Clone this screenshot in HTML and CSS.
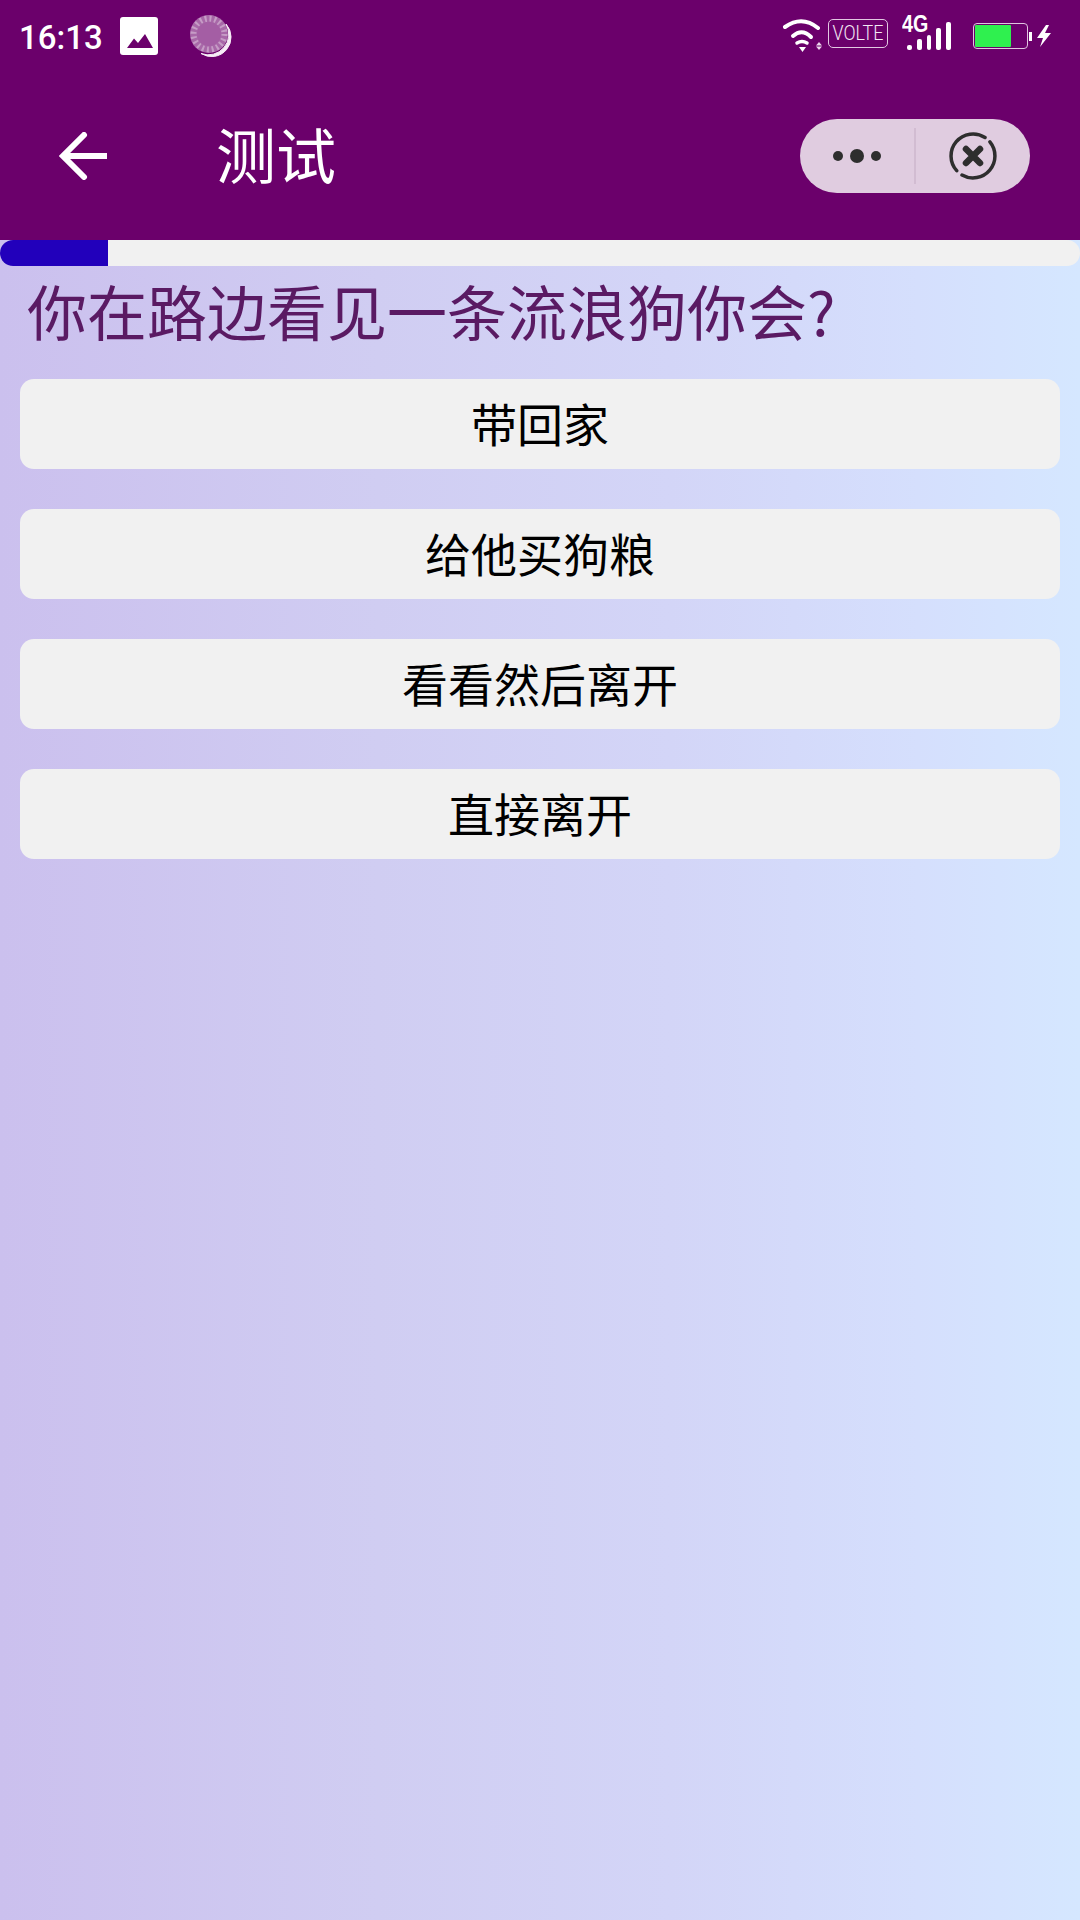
FILE: index.html
```html
<!DOCTYPE html>
<html lang="zh-CN">
<head>
<meta charset="utf-8">
<title>测试</title>
<link rel="stylesheet" href="styles.css">
</head>
<body>
<div class="top">
  <div class="status">
    <div class="status-left">
      <span class="time">16:13</span>
      <svg class="pic" width="40" height="40" viewBox="0 0 40 40"><rect x="1" y="1" width="38" height="38" rx="3" fill="#fff"/><path d="M8 32 L15 22.5 L19 27 L26 18 L34 32 Z" fill="#6b006b"/></svg>
      <svg class="spin" width="46" height="46" viewBox="0 0 46 46"><circle cx="20" cy="21" r="19" fill="#a868a8"/><circle cx="20" cy="21" r="15.5" fill="none" stroke="#c69cc6" stroke-width="6" stroke-dasharray="2 2.87"/><circle cx="20" cy="21" r="12" fill="#a45ea4"/><path d="M37 11 A20.5 20.5 0 0 1 12 40.5 A 19.5 19.5 0 0 0 37 11 Z" fill="#f6ecf6" stroke="#f6ecf6" stroke-width="1" stroke-linejoin="round"/></svg>
    </div>
    <div class="status-right">
      <svg width="44" height="36" viewBox="0 0 44 36" fill="none" stroke="#fff" stroke-linecap="round"><path d="M4 9 Q21 -3 37 10" stroke-width="4"/><path d="M12 18 Q21 10 30 19" stroke-width="4"/><path d="M16 25 Q21 22 26 25" stroke-width="3.5"/><path d="M18 29 H25 L21.5 34 Z" fill="#fff" stroke="none"/><path d="M38 24 L41 27.5 H35 Z M38 32 L41 28.5 H35 Z" fill="#ecd8ec" stroke="none"/></svg>
      <span class="volte"><span class="volte-text">VOLTE</span></span>
      <div class="signal">
        <span class="net">4G</span>
        <i class="b1"></i><i class="b2"></i><i class="b3"></i><i class="b4"></i><i class="b5"></i>
      </div>
      <div class="battery"><div class="level"></div></div>
      <svg class="bolt" width="16" height="24" viewBox="0 0 16 24"><path d="M10 1 L1 14 L7 14 L4 23 L15 9 L9 9 L13 1 Z" fill="#fff"/></svg>
    </div>
  </div>
  <div class="nav">
    <svg class="back" width="48" height="48" viewBox="0 0 48 48" fill="none" stroke="#fff" stroke-width="6"><path d="M48 24 H5"/><path d="M25 3 L4 24 L25 45" stroke-linecap="round" stroke-linejoin="miter"/></svg>
    <h1 class="title">测试</h1>
    <div class="capsule">
      <div class="cap-part">
        <svg width="48" height="16" viewBox="0 0 48 16" fill="#2e2e2e"><circle cx="5" cy="8" r="5"/><circle cx="24" cy="8" r="7"/><circle cx="43" cy="8" r="5"/></svg>
      </div>
      <div class="cap-line"></div>
      <div class="cap-part">
        <svg width="48" height="48" viewBox="0 0 48 48" fill="none" stroke="#2e2e2e" stroke-linecap="round"><path d="M36 5.5 A22 22 0 0 0 7.7 38.7" stroke-width="3.5"/><path d="M40.9 9.9 A22 22 0 0 1 13 43" stroke-width="3.5"/><path d="M17 17 L31 31 M31 17 L17 31" stroke-width="6.5"/></svg>
      </div>
    </div>
  </div>
</div>
<main class="page">
  <div class="track"><div class="fill"></div></div>
  <h2 class="question">你在路边看见一条流浪狗你会?</h2>
  <div class="options">
    <button class="option">带回家</button>
    <button class="option">给他买狗粮</button>
    <button class="option">看看然后离开</button>
    <button class="option">直接离开</button>
  </div>
</main>
</body>
</html>
```
FILE: styles.css
```css
* { box-sizing: border-box; }
html, body { margin: 0; padding: 0; width: 1080px; height: 1920px; overflow: hidden; }
body { font-family: "Noto Sans CJK SC", Roboto, sans-serif; background: #cbc0ed; display: flex; flex-direction: column; }
.top { background: #6b006b; height: 240px; flex: none; }
.status { height: 72px; display: flex; justify-content: space-between; align-items: center; padding: 0 28px 0 19px; }
.status-left { display: flex; align-items: center; }
.time { font-family: Roboto, sans-serif; font-weight: 500; font-size: 33px; color: #fff; width: 100px; margin-top: 3px; }
.pic { margin-right: 30px; }
.status-right { display: flex; align-items: center; }
.volte { font-family: Roboto, sans-serif; font-weight: 300; font-size: 21px; color: #f4e8f4; border: 1.5px solid #e2c8e2; border-radius: 5px; width: 60px; height: 29px; line-height: 26px; text-align: center; margin-left: 3px; margin-right: 14px; margin-bottom: 5px; white-space: nowrap; display: flex; justify-content: center; }
.volte-text { display: inline-block; transform: scaleX(0.85); }
.signal { position: relative; width: 49px; height: 33px; display: flex; align-items: flex-end; gap: 5px; padding-left: 5px; margin-right: 22px; margin-bottom: 5px; }
.net { position: absolute; left: 0; top: -5px; font-family: "Liberation Sans", sans-serif; font-weight: 700; font-size: 24px; line-height: 24px; color: #fff; transform: scaleX(0.82); transform-origin: left; }
.signal i { display: block; width: 5px; background: #fff; border-radius: 2px; }
.b1 { height: 5px; }
.b2 { height: 11px; }
.b3 { height: 15px; }
.b4 { height: 22px; }
.b5 { height: 28px; }
.battery { position: relative; width: 55px; height: 26px; border: 1px solid #e0c4e0; border-radius: 4px; padding: 1px; }
.battery::after { content: ""; position: absolute; right: -5px; top: 8px; width: 3px; height: 9px; background: #fff; }
.level { width: 36px; height: 100%; background: #2ff04f; border-radius: 1px; }
.bolt { margin-left: 8px; }
.nav { height: 168px; display: flex; align-items: center; padding: 0 50px 0 59px; }
.back { flex: none; }
.title { margin: 0 0 6px 109px; font-size: 60px; font-weight: 400; line-height: 80px; color: #fff; flex: 1; }
.capsule { width: 230px; height: 74px; border-radius: 37px; background: #e0cce0; display: flex; align-items: center; }
.cap-part { flex: 1; display: flex; align-items: center; justify-content: center; }
.cap-line { width: 2px; height: 56px; background: #d2bcd2; }
.page { flex: 1; background: linear-gradient(90deg, #cbc0ee 0%, #d0cdf2 35%, #d3d5f7 62%, #d5dffd 85%, #d5e7ff 100%); }
.track { height: 26px; background: #f1f1f1; border-radius: 13px; overflow: hidden; }
.fill { width: 108px; height: 100%; background: #2200bb; }
.question { margin: 0; padding: 4px 0 0 27px; font-size: 60px; font-weight: 400; line-height: 80px; color: #5a1a63; }
.options { display: flex; flex-direction: column; gap: 40px; padding: 29px 20px 0; }
.option { height: 90px; border: 0; border-radius: 14px; background: #f1f1f1; font-family: inherit; font-size: 46px; color: #000; padding: 0 0 4px; }
```
